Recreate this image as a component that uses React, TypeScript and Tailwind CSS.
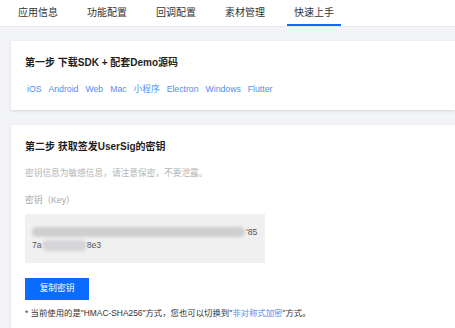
import React from "react";

const tabs = ["应用信息", "功能配置", "回调配置", "素材管理", "快速上手"];
const platforms = ["iOS", "Android", "Web", "Mac", "小程序", "Electron", "Windows", "Flutter"];

const font = { fontFamily: '"Liberation Sans", "Noto Sans CJK SC", sans-serif' };

export default function App() {
    return (
        <div className="w-[455px] h-[328px] overflow-hidden bg-[#f3f4f7]" style={font}>
            {/* Tabs */}
            <div className="h-[27px] bg-white border-b border-[#e6e8ee] flex items-end gap-[15px] px-[11px]">
                {tabs.map((t, i) => (
                    <div
                        key={t}
                        className={
                            "h-[26px] px-[7px] flex items-center text-[10px] text-[#333] " +
                            (i === 4 ? "border-b-2 border-[#0a6cff]" : "border-b-2 border-transparent")
                        }
                    >
                        {t}
                    </div>
                ))}
            </div>

            <div className="pl-[11px] pt-[14px] flex flex-col gap-[15px]">
                {/* Step 1 */}
                <div className="bg-white h-[69px] shadow-[0_1px_3px_rgba(0,0,0,0.12)] pl-[14px] pt-[16px]">
                    <div className="text-[10px] font-bold text-[#1d1d1d] leading-[12px]">第一步 下载SDK + 配套Demo源码</div>
                    <div className="flex gap-[7px] mt-[15px] text-[8.7px] text-[#4f8cf6] leading-[11px] pl-[2px]">
                        {platforms.map((p) => (
                            <span key={p}>{p}</span>
                        ))}
                    </div>
                </div>

                {/* Step 2 */}
                <div className="bg-white h-[220px] shadow-[0_1px_3px_rgba(0,0,0,0.12)] pl-[14px] pt-[16px]">
                    <div className="text-[10px] font-bold text-[#1d1d1d] leading-[12px]">第二步 获取签发UserSig的密钥</div>
                    <div className="text-[8.7px] text-[#b4b4b4] mt-[15px] leading-[11px]">密钥信息为敏感信息，请注意保密，不要泄露。</div>
                    <div className="text-[8.7px] text-[#a6a6a6] mt-[16px] leading-[11px]">密钥（Key）</div>
                    <div className="w-[240px] h-[49px] bg-[#f0f0f0] mt-[8px] relative text-[8.7px] text-[#555] leading-[12px] pt-[12px] pl-[7px]">
                        <div className="flex items-center h-[12px]">
                            <div className="w-[213px] h-[10px] rounded-full bg-[#cfcfd2] blur-[1.5px]" />
                            <span className="ml-[1px]">'85</span>
                        </div>
                        <div className="flex items-center h-[12px] mt-[1px]">
                            <span>7a</span>
                            <div className="w-[45px] h-[11px] rounded-full bg-[#d6d4d8] blur-[1.5px]" />
                            <span>8e3</span>
                        </div>
                    </div>
                    <button className="mt-[15px] w-[64px] h-[22px] bg-[#0a6cff] text-white text-[8.7px] flex items-center justify-center">
                        复制密钥
                    </button>
                    <div className="text-[8.4px] text-[#333] mt-[8px] leading-[11px]">
                        * 当前使用的是"HMAC-SHA256"方式，您也可以切换到"<span className="text-[#4f8cf6]">非对称式加密</span>"方式。
                    </div>
                </div>
            </div>
        </div>
    );
}
